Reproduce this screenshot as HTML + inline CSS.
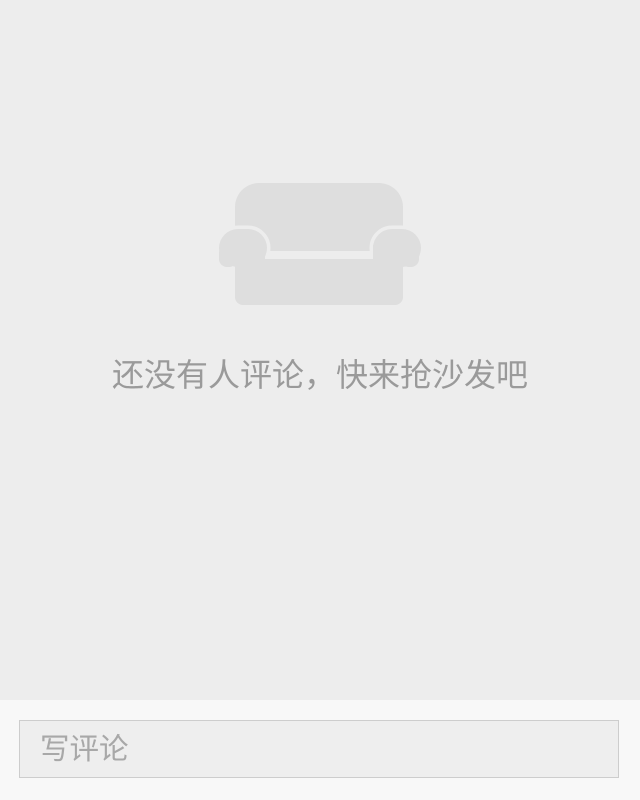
<!DOCTYPE html>
<html><head><meta charset="utf-8"><style>
html,body{margin:0;padding:0;width:640px;height:800px;overflow:hidden;background:#ededed;font-family:"Liberation Sans","Noto Sans CJK SC",sans-serif;}
.msg{position:absolute;left:0;width:640px;top:354px;text-align:center;font-size:32px;line-height:42px;color:#9a9a9a;}
.bar{position:absolute;left:0;top:700px;width:640px;height:100px;background:#f8f8f8;}
.inp{position:absolute;left:19px;top:720px;width:598px;height:56px;border:1px solid #cdcdcd;background:#eeeeee;}
.inp span{position:absolute;left:20px;top:10px;font-size:29.5px;line-height:38px;color:#a8a8a8;}
</style></head><body>
<svg width="640" height="700" style="position:absolute;left:0;top:0">
<rect x="235" y="183" width="168" height="100" rx="24" fill="#dedede"/>
<rect x="258" y="251" width="124" height="9" fill="#ededed"/>
<g fill="#dedede" stroke="#ededed" stroke-width="7" paint-order="stroke">
<rect x="219" y="229" width="48" height="38" rx="19"/>
<rect x="373" y="229" width="48" height="38" rx="19"/>
</g>
<rect x="235" y="259" width="168" height="46" rx="8" fill="#dedede"/>
<rect x="235" y="245" width="30" height="30" fill="#dedede"/>
<rect x="373" y="245" width="30" height="30" fill="#dedede"/>
<rect x="219" y="245" width="18" height="22" rx="8" fill="#dedede"/>
<rect x="401" y="245" width="18" height="22" rx="8" fill="#dedede"/>
</svg>
<div class="msg">还没有人评论，快来抢沙发吧</div>
<div class="bar"></div>
<div class="inp"><span>写评论</span></div>
</body></html>
